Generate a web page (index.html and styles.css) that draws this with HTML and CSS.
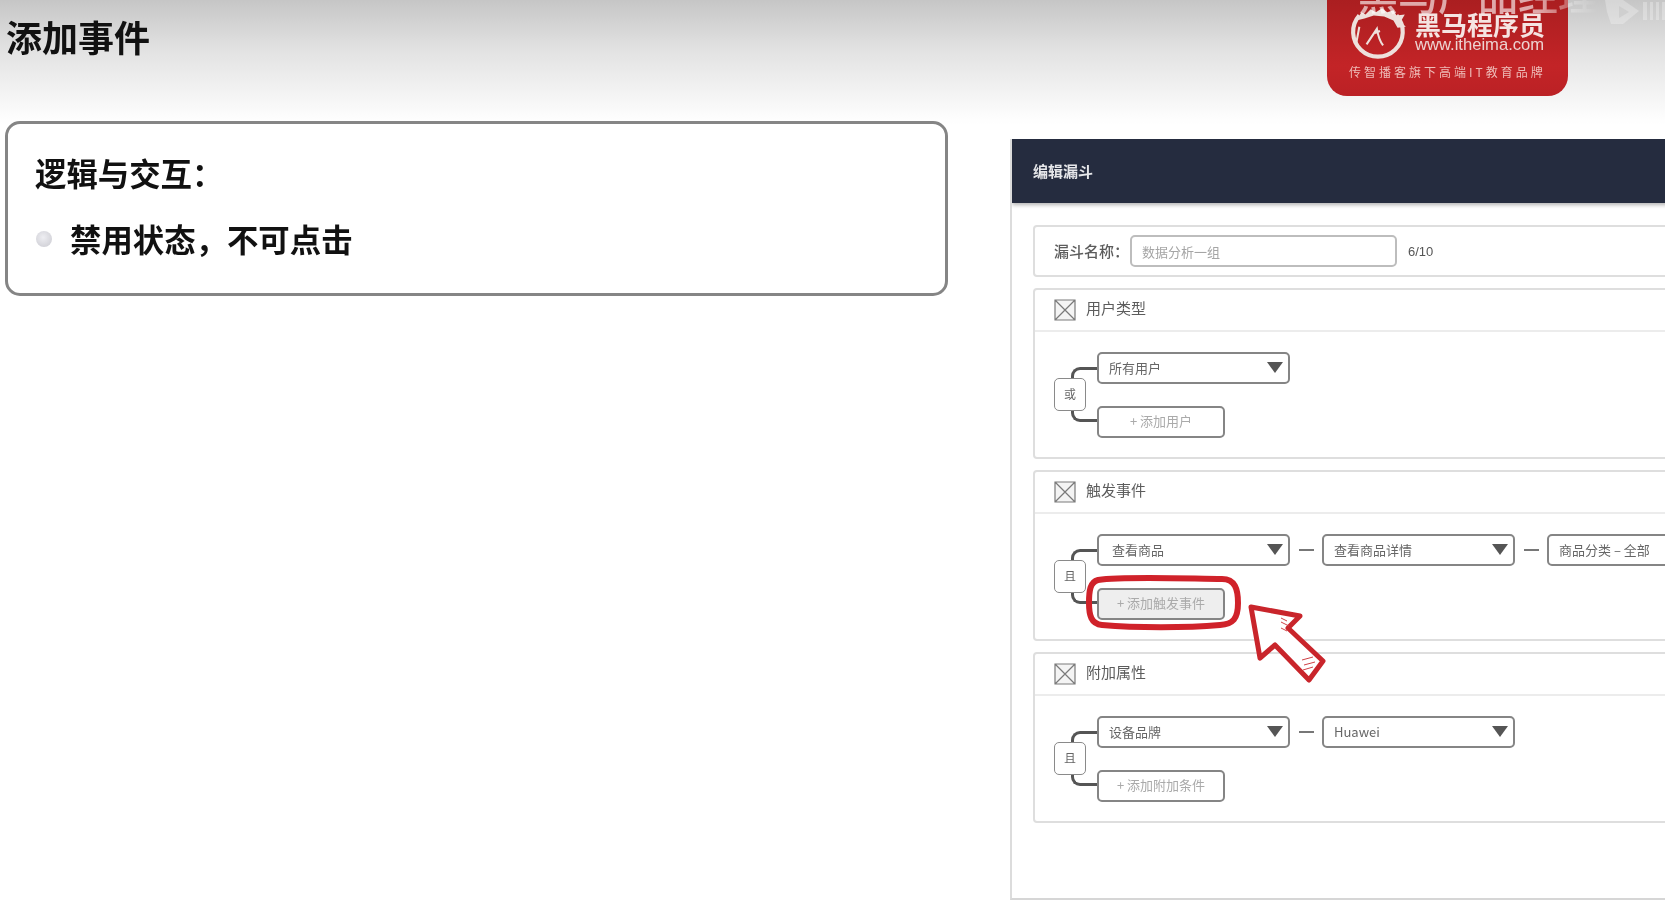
FILE: index.html
```html
<!DOCTYPE html>
<html lang="zh-CN">
<head>
<meta charset="utf-8">
<title>添加事件</title>
<link rel="stylesheet" href="styles.css">
</head>
<body>
<div class="slide">
  <h1 class="title">添加事件</h1>
  <div class="content">
    <section class="callout">
      <h2 class="callout-head">逻辑与交互&#xFF1A;</h2>
      <p class="callout-item"><span class="dot"></span>禁用状态&#xFF0C;不可点击</p>
    </section>
    <section class="panel">
      <header class="panel-head">编辑漏斗</header>
      <div class="panel-body">
        <div class="card name-card">
          <span class="name-label">漏斗名称&#xFF1A;</span>
          <span class="name-input">数据分析一组</span>
          <span class="name-count">6/10</span>
        </div>
        <div class="card">
          <div class="card-head">
            <svg class="ph" viewBox="0 0 22 22"><path d="M1 1h20v20H1zM1 1l20 20M21 1L1 21"/></svg>
            <span class="card-title">用户类型</span>
          </div>
          <div class="tree">
            <span class="bracket"></span>
            <span class="logic">或</span>
            <div class="rows">
              <div class="row"><div class="select">所有用户<i class="caret"></i></div></div>
              <div class="add">+ 添加用户</div>
            </div>
          </div>
        </div>
        <div class="card">
          <div class="card-head">
            <svg class="ph" viewBox="0 0 22 22"><path d="M1 1h20v20H1zM1 1l20 20M21 1L1 21"/></svg>
            <span class="card-title">触发事件</span>
          </div>
          <div class="tree">
            <span class="bracket"></span>
            <span class="logic">且</span>
            <div class="rows">
              <div class="row">
                <div class="select indent">查看商品<i class="caret"></i></div>
                <span class="dash"></span>
                <div class="select">查看商品详情<i class="caret"></i></div>
                <span class="dash"></span>
                <div class="select">商品分类 – 全部<i class="caret"></i></div>
              </div>
              <div class="add disabled">+ 添加触发事件</div>
            </div>
          </div>
        </div>
        <div class="card">
          <div class="card-head">
            <svg class="ph" viewBox="0 0 22 22"><path d="M1 1h20v20H1zM1 1l20 20M21 1L1 21"/></svg>
            <span class="card-title">附加属性</span>
          </div>
          <div class="tree">
            <span class="bracket"></span>
            <span class="logic">且</span>
            <div class="rows">
              <div class="row">
                <div class="select">设备品牌<i class="caret"></i></div>
                <span class="dash"></span>
                <div class="select">Huawei<i class="caret"></i></div>
              </div>
              <div class="add">+ 添加附加条件</div>
            </div>
          </div>
        </div>
      </div>
    </section>
  </div>

  <svg class="marker" viewBox="0 0 260 120" aria-hidden="true">
    <path class="ring" d="M12 7C40 3 110 6 136 6C149 6 152 16 152 30C152 46 147 51 134 52C100 55 50 55 16 52C5 51 3 42 3 30C3 18 4 9 12 7Z"/>
    <path class="arrow" d="M165 34L214 43L202 55L237 88L223 107L189 72L174 85Z"/>
    <path class="hatch" d="M201 48l-6-3M203 53l-8-4M201 58l-6-3M227 84l-11 3M229 89l-11 3M227 94l-10 3"/>
  </svg>

  <div class="logo">
    <svg class="logo-mark" viewBox="0 0 60 52" aria-hidden="true">
      <path class="logo-ring" d="M46 9A24 24 0 1 1 10 9"/>
      <path class="logo-mane" d="M7 14L12 6L16 8L21 3L26 6L32 2L37 6L43 4L46 9L54 8L50 15L55 20L47 21L43 14L34 10L24 9L15 12Z"/>
      <path class="logo-horse" d="M10 20L7 36M17 37L27 22C28 28 29 33 33 38M25 26L30 24"/>
    </svg>
    <div class="logo-name">黑马程序员</div>
    <div class="logo-url">www.itheima.com</div>
    <div class="logo-slogan">传智播客旗下高端IT教育品牌</div>
  </div>
  <div class="ghost-title">黑马产品经理</div>
  <svg class="ghost-mark" viewBox="0 0 60 26" aria-hidden="true">
    <path d="M0 0H18L34 11L18 24H6L2 12Z"/>
    <path class="ghost-hole" d="M14 6L24 12L14 18Z"/>
    <path d="M38 2h4v18h-4zM45 2h3v18h-3zM51 2h3v18h-3zM57 2h3v18h-3z"/>
  </svg>
</div>
</body>
</html>
```
FILE: styles.css
```css
* { box-sizing: border-box; }
html, body { margin: 0; padding: 0; }
body { font-family: "Noto Sans CJK SC", "Liberation Sans", sans-serif; background: #fff; }

.slide {
  position: relative;
  width: 1665px;
  height: 910px;
  overflow: hidden;
  background: linear-gradient(#c6c6c6 0, #e2e2e2 50px, #fdfdfd 118px, #fff 125px);
  filter: blur(0.45px);
}

.title {
  margin: 0;
  height: 121px;
  padding: 10px 0 0 6px;
  font-size: 36px;
  line-height: 52px;
  font-weight: 700;
  color: #111;
}

.content { display: flex; align-items: flex-start; }

.callout {
  flex: none;
  width: 943px;
  height: 175px;
  margin-left: 5px;
  padding: 26px 0 0 27px;
  background: #fff;
  border: 3px solid #858585;
  border-radius: 15px;
}
.callout-head {
  margin: 0;
  font-size: 31.4px;
  line-height: 46px;
  font-weight: 700;
  color: #111;
}
.callout-item {
  display: flex;
  align-items: center;
  margin: 20px 0 0;
  font-size: 31.4px;
  line-height: 46px;
  font-weight: 700;
  color: #111;
}
.dot {
  width: 16px;
  height: 16px;
  margin: 0 18px 0 1px;
  border-radius: 50%;
  background: radial-gradient(circle at 45% 40%, #eeeef2, #c9c9d0);
}

.panel {
  flex: none;
  width: 700px;
  height: 761px;
  margin: 18px 0 0 62px;
  background: #fff;
  border-left: 2px solid #dcdcdc;
  border-bottom: 2px solid #d6d6d6;
  overflow: hidden;
}
.panel-head {
  height: 64px;
  padding-left: 21px;
  font-size: 15px;
  line-height: 64px;
  font-weight: 700;
  color: #e6e7ea;
  background: #252c3f;
  box-shadow: 0 2px 4px rgba(0, 0, 0, .3);
}
.panel-body {
  display: flex;
  flex-direction: column;
  gap: 11px;
  width: 780px;
  padding: 22px 0 0 21px;
}

.card {
  background: #fff;
  border: 2px solid #dedede;
  border-radius: 4px;
}
.name-card {
  display: flex;
  align-items: center;
  height: 52px;
  padding-left: 19px;
  font-size: 14px;
  color: #5c5c5c;
}
.name-label { flex: none; width: 76px; font-size: 15px; line-height: 20px; font-weight: 500; }
.name-input {
  width: 267px;
  height: 32px;
  padding-left: 10px;
  font-size: 13px;
  line-height: 29px;
  color: #a5a5a5;
  border: 2px solid #bdbdbd;
  border-radius: 5px;
}
.name-count { margin-left: 11px; font-family: "Liberation Sans", sans-serif; font-size: 13px; color: #555; }

.card-head {
  display: flex;
  align-items: center;
  gap: 10px;
  height: 42px;
  padding-left: 19px;
  font-size: 15px;
  color: #5c5c5c;
  border-bottom: 2px solid #ececec;
}
.card-title { line-height: 20px; margin-bottom: 4px; }
.ph { width: 22px; height: 22px; }
.ph path { fill: #f4f4f4; stroke: #7a7a7a; stroke-width: 1.2; }

.tree {
  position: relative;
  display: flex;
  align-items: center;
  height: 125px;
  padding-left: 19px;
}
.bracket {
  position: absolute;
  left: 36px;
  top: 35px;
  width: 28px;
  height: 55px;
  border: 3px solid #555;
  border-right: 0;
  border-radius: 9px 0 0 9px;
}
.logic {
  position: relative;
  flex: none;
  width: 32px;
  height: 33px;
  font-size: 12px;
  line-height: 29px;
  text-align: center;
  color: #666;
  background: #fff;
  border: 1.5px solid #8a8a8a;
  border-radius: 5px;
}
.rows {
  position: relative;
  display: flex;
  flex-direction: column;
  gap: 22px;
  margin-left: 11px;
}
.row { display: flex; align-items: center; }
.select {
  position: relative;
  flex: none;
  width: 193px;
  height: 32px;
  padding-left: 10px;
  font-size: 13px;
  line-height: 27px;
  color: #666;
  background: #fff;
  border: 2px solid #858585;
  border-radius: 5px;
}
.select.indent { padding-left: 13px; }
.caret {
  position: absolute;
  right: 5px;
  top: 8px;
  width: 0;
  height: 0;
  border-left: 8.5px solid transparent;
  border-right: 8.5px solid transparent;
  border-top: 11px solid #555;
}
.dash { flex: none; width: 15px; height: 2px; margin: 0 8px 0 9px; background: #777; }
.add {
  width: 128px;
  height: 32px;
  font-size: 13px;
  line-height: 26px;
  text-align: center;
  color: #aaa;
  background: #fff;
  border: 2px solid #858585;
  border-radius: 5px;
}
.add.disabled { background: #eeeeee; }

.marker {
  position: absolute;
  left: 1086px;
  top: 573px;
  width: 260px;
  height: 120px;
  overflow: visible;
}
.ring { fill: none; stroke: #d0222a; stroke-width: 6; stroke-linejoin: round; }
.arrow { fill: #fff; stroke: #c9252b; stroke-width: 5; stroke-linejoin: round; }
.hatch { fill: none; stroke: #cf4146; stroke-width: 1; }

.logo {
  position: absolute;
  left: 1327px;
  top: -4px;
  width: 241px;
  height: 100px;
  padding: 14px 0 0 88px;
  color: #f5e4e2;
  background: linear-gradient(#a91e20, #c32427 70%, #bb2125);
  border-radius: 0 0 20px 20px;
}
.logo-mark { position: absolute; left: 22px; top: 10px; width: 62px; height: 54px; }
.logo-ring { fill: none; stroke: #eee0dc; stroke-width: 4; }
.logo-mane { fill: #eee0dc; }
.logo-horse { fill: none; stroke: #eee0dc; stroke-width: 2; }
.logo-name { font-size: 26px; line-height: 27px; font-weight: 700; white-space: nowrap; }
.logo-url { font-family: "Liberation Sans", sans-serif; font-size: 16.6px; line-height: 16px; white-space: nowrap; color: #edd3d1; }
.logo-slogan {
  position: absolute;
  left: 22px;
  top: 68px;
  font-size: 12px;
  line-height: 16px;
  letter-spacing: 3px;
  white-space: nowrap;
  color: #eebcb8;
}

.ghost-title {
  position: absolute;
  left: 1358px;
  top: -33px;
  font-size: 40px;
  line-height: 52px;
  font-weight: 500;
  white-space: nowrap;
  color: rgba(255, 255, 255, .62);
  -webkit-mask-image: linear-gradient(90deg, #000 75%, transparent);
  mask-image: linear-gradient(90deg, #000 75%, transparent);
}
.ghost-mark {
  position: absolute;
  left: 1605px;
  top: 0;
  width: 60px;
  height: 26px;
  fill: rgba(255, 255, 255, .28);
}
.ghost-mark .ghost-hole { fill: rgba(190, 190, 190, .4); }
```
